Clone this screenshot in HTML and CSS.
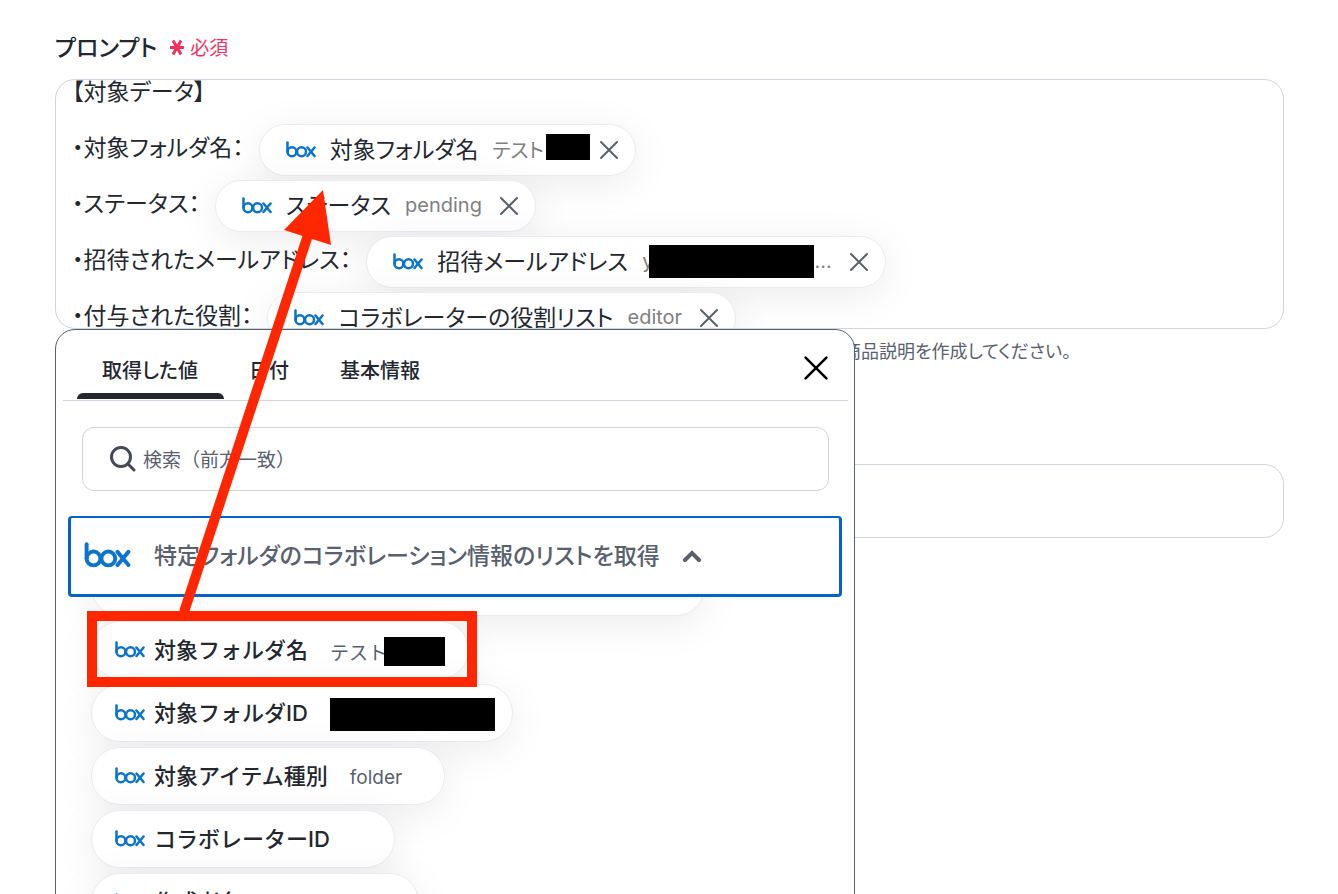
FILE: index.html
```html
<!DOCTYPE html>
<html lang="ja">
<head>
    <meta charset="UTF-8">
    <meta name="viewport" content="width=device-width, initial-scale=1.0">
    <title>プロンプト</title>
    <link rel="stylesheet" href="styles.css">
</head>
<body>
    <!-- Shared icons -->
    <svg class="symbols" aria-hidden="true">
        <symbol id="box-logo" viewBox="0 0 141 79">
            <g fill="none" stroke="#0d74cb" stroke-width="12" stroke-linecap="round">
                <path d="M7 7V50" />
                <circle cx="28" cy="50" r="21" />
                <circle cx="73" cy="50" r="21" />
                <path d="M101 30L134 70M134 30L101 70" />
            </g>
        </symbol>
        <symbol id="cross" viewBox="0 0 20 20">
            <path d="M2 2L18 18M18 2L2 18" fill="none" stroke="currentColor" stroke-width="2" stroke-linecap="round" />
        </symbol>
    </svg>

    <main class="form">
        <div class="field-label">
            <span id="prompt-label">プロンプト</span>
            <span class="required">
                <svg class="asterisk" viewBox="0 0 16 16"><path d="M1 9H15M4 2L12 16M12 2L4 16" /></svg>
                必須
            </span>
        </div>

        <div class="anchor">
            <div class="editor" role="textbox" aria-multiline="true" aria-labelledby="prompt-label">
                <div class="line heading">【対象データ】</div>
                <div class="line">
                    <span class="name">・対象フォルダ名：</span>
                    <span class="token">
                        <svg class="logo"><use href="#box-logo" /></svg>
                        <span class="title">対象フォルダ名</span>
                        <span class="value">テスト<span class="mask mask-short"></span></span>
                        <button class="remove" aria-label="削除"><svg><use href="#cross" /></svg></button>
                    </span>
                </div>
                <div class="line">
                    <span class="name">・ステータス：</span>
                    <span class="token">
                        <svg class="logo"><use href="#box-logo" /></svg>
                        <span class="title">ステータス</span>
                        <span class="value">pending</span>
                        <button class="remove" aria-label="削除"><svg><use href="#cross" /></svg></button>
                    </span>
                </div>
                <div class="line">
                    <span class="name">・招待されたメールアドレス：</span>
                    <span class="token">
                        <svg class="logo"><use href="#box-logo" /></svg>
                        <span class="title">招待メールアドレス</span>
                        <span class="value">y<span class="mask mask-long"></span>...</span>
                        <button class="remove" aria-label="削除"><svg><use href="#cross" /></svg></button>
                    </span>
                </div>
                <div class="line">
                    <span class="name">・付与された役割：</span>
                    <span class="token">
                        <svg class="logo"><use href="#box-logo" /></svg>
                        <span class="title">コラボレーターの役割リスト</span>
                        <span class="value">editor</span>
                        <button class="remove" aria-label="削除"><svg><use href="#cross" /></svg></button>
                    </span>
                </div>
            </div>

            <!-- Value picker, opens under the editor -->
            <div class="picker">
                <div class="tabs">
                    <button class="tab active">取得した値</button>
                    <button class="tab">日付</button>
                    <button class="tab">基本情報</button>
                    <button class="close" aria-label="閉じる"><svg><use href="#cross" /></svg></button>
                </div>

                <label class="search">
                    <svg viewBox="0 0 26 26"><circle cx="11" cy="11" r="9.500" /><path d="M18 18L24 24" /></svg>
                    <input type="text" placeholder="検索（前方一致）" aria-label="検索">
                </label>

                <div class="results">
                    <button class="group">
                        <svg class="logo-large"><use href="#box-logo" /></svg>
                        <span class="title">特定フォルダのコラボレーション情報のリストを取得</span>
                        <svg class="chevron" viewBox="0 0 18 12"><path d="M2 10L9 3L16 10" /></svg>
                    </button>
                    <div class="options">
                        <div class="option option-above"></div>
                        <button class="option">
                            <svg class="logo"><use href="#box-logo" /></svg>
                            <span class="title">対象フォルダ名</span>
                            <span class="sample">テスト<span class="mask mask-mid"></span></span>
                        </button>
                        <button class="option">
                            <svg class="logo"><use href="#box-logo" /></svg>
                            <span class="title">対象フォルダID</span>
                            <span class="sample"><span class="mask mask-id"></span></span>
                        </button>
                        <button class="option">
                            <svg class="logo"><use href="#box-logo" /></svg>
                            <span class="title">対象アイテム種別</span>
                            <span class="sample">folder</span>
                        </button>
                        <button class="option">
                            <svg class="logo"><use href="#box-logo" /></svg>
                            <span class="title">コラボレーターID</span>
                            <span class="sample"></span>
                        </button>
                        <button class="option">
                            <svg class="logo"><use href="#box-logo" /></svg>
                            <span class="title">作成者名</span>
                            <span class="sample">2024-04-20</span>
                        </button>
                    </div>
                </div>
            </div>
        </div>

        <p class="help">商品説明を作成してください。</p>
        <input class="text-field" type="text" aria-label="入力">
    </main>

    <!-- Highlight and arrow from the option to the editor -->
    <svg class="annotation" aria-hidden="true">
        <rect x="92" y="616" width="380" height="66" />
        <path class="shaft" d="M184 612L309 232" />
        <path class="head" d="M323 190L284 230L331 245Z" />
    </svg>
</body>
</html>
```
FILE: styles.css
```css
* {
    box-sizing: border-box;
}

body {
    margin: 0;
    height: 100vh;
    position: relative;
    overflow: hidden;
    background: #fff;
    color: #23282f;
    font-family: Inter, "Noto Sans CJK JP", sans-serif;
    font-feature-settings: "palt";
}

button {
    border: none;
    background: none;
    padding: 0;
    color: inherit;
    font-family: inherit;
    font-feature-settings: inherit;
    cursor: pointer;
}

.symbols {
    position: absolute;
    width: 0;
    height: 0;
}

.form {
    padding: 30px 54px 0 55px;
}

.field-label {
    display: flex;
    align-items: center;
    gap: 12px;
    height: 32px;
    margin-bottom: 17px;
    font-size: 23px;
    font-weight: 500;
}

.required {
    display: flex;
    align-items: center;
    gap: 5px;
    color: #f4305c;
    font-size: 19px;
    font-weight: 400;
}

.asterisk {
    width: 16px;
    height: 17px;
    fill: none;
    stroke: #f4305c;
    stroke-width: 3;
}

.anchor {
    position: relative;
}

/* Editor */
.editor {
    height: 250px;
    padding: 0 16px;
    border: 1px solid #ced6df;
    border-radius: 20px;
    overflow: hidden;
    font-size: 23px;
}

.line {
    display: flex;
    align-items: center;
    gap: 15px;
    height: 56px;
    white-space: nowrap;
}

.line.heading {
    height: 42px;
    padding-bottom: 18px;
    line-height: 24px;
}

.name {
    padding-bottom: 8px;
}

.token {
    display: flex;
    align-items: center;
    gap: 14px;
    height: 52px;
    padding: 0 16px 0 26px;
    border: 1px solid #e9ebf2;
    border-radius: 26px;
    background: #fff;
    box-shadow: 0 8px 40px rgba(0, 0, 0, 0.08);
}

.title {
    padding-bottom: 4px;
}

.logo {
    width: 30px;
    height: 17px;
    margin-bottom: 2px;
}

.value {
    display: flex;
    align-items: center;
    padding-bottom: 2px;
    color: #808080;
    font-size: 20px;
}

.mask {
    background: #000;
}

.mask-short {
    width: 44px;
    height: 26px;
    margin: -4px -8px 0 2px;
}

.mask-long {
    width: 165px;
    height: 33px;
    margin-left: -4px;
}

.mask-mid {
    width: 61px;
    height: 29px;
    margin: 0 -19px 0 -3px;
}

.mask-id {
    width: 165px;
    height: 33px;
    margin-right: -25px;
}

.remove {
    display: flex;
    margin-left: 3px;
    color: #58616d;
}

.remove svg {
    width: 20px;
    height: 20px;
    stroke-width: 3;
}

/* Picker */
.picker {
    position: absolute;
    top: 100%;
    left: 0;
    z-index: 1;
    width: 800px;
    height: 620px;
    padding: 0 6px 0 7px;
    border: 1px solid #58616d;
    border-radius: 20px;
    background: #fff;
}

.tabs {
    display: flex;
    height: 71px;
    padding: 0 16px 0 14px;
    border-bottom: 1px solid #ced6df;
}

.tab {
    position: relative;
    padding: 8px 26px 0 25px;
    font-size: 20px;
    font-weight: 500;
}

.tab.active::after {
    content: "";
    position: absolute;
    left: 0;
    right: 0;
    bottom: 1px;
    height: 6px;
    border-radius: 6px 6px 0 0;
    background: #23282f;
}

.close {
    display: flex;
    align-items: center;
    margin-left: auto;
    padding-top: 6px;
    color: #000;
}

.close svg {
    width: 32px;
    height: 26px;
}

.search {
    display: flex;
    align-items: center;
    gap: 7px;
    height: 64px;
    margin: 26px 19px 25px;
    padding: 0 27px;
    border: 1px solid #ced6df;
    border-radius: 12px;
}

.search svg {
    width: 26px;
    height: 26px;
    fill: none;
    stroke: #434a54;
    stroke-width: 3;
    stroke-linecap: round;
}

.search input {
    flex: 1;
    border: none;
    outline: none;
    padding: 2px 0 0;
    background: none;
    color: #58616d;
    font-family: inherit;
    font-size: 19px;
}

.search input::placeholder {
    color: #58616d;
}

.results {
    margin: 0 6px 0 5px;
}

.group {
    position: relative;
    z-index: 1;
    display: flex;
    align-items: center;
    gap: 23px;
    width: 100%;
    height: 81px;
    padding: 0 13px;
    border: 3px solid #0562cc;
    border-top-width: 2px;
    border-radius: 4px;
    background: #fff;
    color: #58616d;
    font-size: 23px;
    font-weight: 500;
}

.logo-large {
    width: 47px;
    height: 26px;
    margin-bottom: 2px;
}

.chevron {
    width: 18px;
    height: 12px;
    fill: none;
    stroke: #58616d;
    stroke-width: 4;
    stroke-linecap: round;
}

.options {
    display: flex;
    flex-direction: column;
    align-items: flex-start;
    gap: 5px;
    margin-top: -39px;
    padding-left: 23px;
}

.option {
    display: flex;
    align-items: center;
    height: 58px;
    padding: 0 42px 0 23px;
    border: 1px solid #e9ebf2;
    border-radius: 29px;
    background: #fff;
    box-shadow: 0 8px 40px rgba(0, 0, 0, 0.08);
    font-size: 22px;
    font-weight: 500;
    font-feature-settings: normal;
}

.option-above {
    width: 614px;
}

.option .logo {
    margin-right: 9px;
}

.sample {
    display: flex;
    align-items: center;
    margin-left: 22px;
    padding-top: 2px;
    color: #58616d;
    font-size: 19px;
    font-weight: 400;
}

/* Fields behind the picker */
.help {
    margin: 8px 0 98px;
    padding-left: 788px;
    color: #58616d;
    font-size: 18px;
    line-height: 29px;
}

.text-field {
    width: 100%;
    height: 74px;
    border: 1px solid #ced6df;
    border-radius: 20px;
    background: #fff;
}

.annotation {
    position: absolute;
    top: 0;
    left: 0;
    z-index: 2;
    width: 100%;
    height: 100%;
    pointer-events: none;
}

.annotation rect,
.annotation .shaft {
    fill: none;
    stroke: #ff2600;
    stroke-width: 10;
}

.annotation .head {
    fill: #ff2600;
}
```
